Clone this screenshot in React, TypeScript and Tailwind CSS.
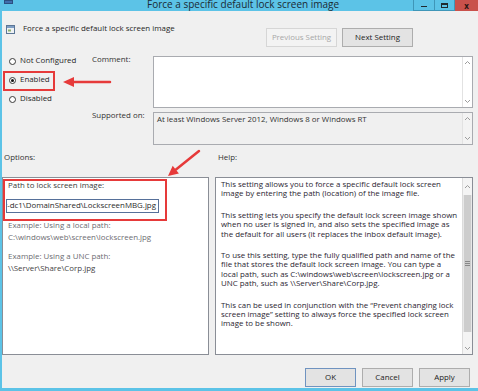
import React from "react";

const HELP = [
  [
    "This setting allows you to force a specific default lock screen",
    "image by entering the path (location) of the image file.",
  ],
  [
    "This setting lets you specify the default lock screen image shown",
    "when no user is signed in, and also sets the specified image as",
    "the default for all users (it replaces the inbox default image).",
  ],
  [
    "To use this setting, type the fully qualified path and name of the",
    "file that stores the default lock screen image. You can type a",
    "local path, such as C:\\windows\\web\\screen\\lockscreen.jpg or a",
    "UNC path, such as \\\\Server\\Share\\Corp.jpg.",
  ],
  [
    "This can be used in conjunction with the \u201cPrevent changing lock",
    "screen image\u201d setting to always force the specified lock screen",
    "image to be shown.",
  ],
];

function Chevron({ up }: { up?: boolean }) {
  return (
    <svg width="7" height="5" viewBox="0 0 7 5" className="text-[#9c9c9c]">
      <path
        d={up ? "M1 4 L3.5 1.5 L6 4" : "M1 1 L3.5 3.5 L6 1"}
        fill="none"
        stroke="currentColor"
        strokeWidth="1"
      />
    </svg>
  );
}

function Radio({ label, checked }: { label: string; checked?: boolean }) {
  return (
    <div className="flex items-center h-[10px] gap-[4.5px]">
      <span className="w-[7px] h-[7px] rounded-full border border-[#3a3a3a] bg-white flex items-center justify-center">
        {checked && <span className="w-[3px] h-[3px] rounded-full bg-[#111]" />}
      </span>
      <span className="text-[#262626]">{label}</span>
    </div>
  );
}

function MiniScroll({ bg }: { bg: string }) {
  return (
    <div className={`w-[10px] flex flex-col justify-between items-center border-l border-[#e2e2e2] py-[3px] ${bg}`}>
      <Chevron up />
      <Chevron />
    </div>
  );
}

function PolicyIcon() {
  return (
    <svg width="9" height="9" viewBox="0 0 9 9">
      <rect x="0.5" y="0.5" width="8" height="8" fill="#eef1f4" stroke="#5b7696" />
      <rect x="1" y="1" width="7" height="2" fill="#7f9ec4" />
      <rect x="2" y="4.5" width="3" height="2" fill="#8fb06a" />
    </svg>
  );
}

export default function App() {
  return (
    <div className="relative w-[478px] h-[391px] overflow-hidden bg-[#5cc3e7] flex flex-col font-['Open_Sans',sans-serif] text-[7.9px] leading-[9.4px] text-[#222]">
      {/* title bar */}
      <div className="h-[11px] flex items-start overflow-hidden">
        <div className="ml-[4px] w-[9px] h-[4px] bg-[#3f6fae] border border-[#2c4f80]" />
        <span className="ml-[134px] -mt-[3px] text-[10px] leading-[14px] text-[#1b2a33] whitespace-nowrap">
          Force a specific default lock screen image
        </span>
        <div className="ml-auto flex h-[11px]">
          <div className="w-[22px] h-full border-x border-b border-[#3f96b8] flex items-end justify-center pb-[3px]">
            <div className="w-[6px] h-[1.5px] bg-[#1f2a30]" />
          </div>
          <div className="w-[20px] h-full border-r border-b border-[#3f96b8] flex items-center justify-center">
            <div className="w-[7px] h-[5px] border border-[#1f2a30] border-t-2" />
          </div>
          <div className="w-[23px] h-full bg-[#c9514b] flex items-center justify-center text-[8px] leading-[8px] font-bold text-[#2a1512]">
            x
          </div>
        </div>
      </div>

      {/* window body */}
      <div className="flex-1 ml-[2px] mb-[3px] bg-[#f0f0f0] flex flex-col">
        {/* header */}
        <div className="mt-[13px] flex items-start">
          <div className="flex items-center h-[10px] pl-[4px] gap-[8px]">
            <PolicyIcon />
            <span className="whitespace-nowrap text-[#262626]">Force a specific default lock screen image</span>
          </div>
          <div className="ml-auto mr-[65px] mt-[4px] flex gap-[5px]">
            <div className="w-[71px] h-[19px] flex items-center justify-center border border-[#d6d6d6] bg-[#f3f3f3] text-[#a8a8a8]">
              Previous Setting
            </div>
            <div className="w-[71px] h-[19px] flex items-center justify-center border border-[#adadad] bg-[#e3e3e3] text-[#1e1e1e]">
              Next Setting
            </div>
          </div>
        </div>

        {/* state + comment */}
        <div className="mt-[9px] flex">
          <div className="w-[90px] pl-[6.5px] flex flex-col gap-[9px]">
            <Radio label="Not Configured" />
            <Radio label="Enabled" checked />
            <Radio label="Disabled" />
          </div>
          <div className="flex-1 mr-[5px] flex flex-col">
            <div className="flex h-[52px]">
              <span className="w-[61px] -mt-[1px] text-[#333]">Comment:</span>
              <div className="flex-1 flex border border-[#a9abb0] bg-white">
                <div className="flex-1" />
                <MiniScroll bg="bg-white" />
              </div>
            </div>
            <div className="flex h-[33px] mt-[4px]">
              <span className="w-[61px] -mt-[1px] text-[#333]">Supported on:</span>
              <div className="flex-1 flex border border-[#a9abb0] bg-[#f0f0f0]">
                <div className="flex-1 pl-[3px] pt-[2px] text-[#333]">
                  At least Windows Server 2012, Windows 8 or Windows RT
                </div>
                <MiniScroll bg="bg-[#f3f3f3]" />
              </div>
            </div>
          </div>
        </div>

        {/* options / help labels */}
        <div className="mt-[7px] flex h-[10px] leading-[10px] text-[#333]">
          <span className="w-[216px] pl-[2px]">Options:</span>
          <span>Help:</span>
        </div>

        {/* panels */}
        <div className="mt-[15px] flex gap-[6px] h-[178px]">
          <div className="w-[207px] border border-[#8a8e96] bg-white flex flex-col pt-[3px]">
            <span className="pl-[5px] text-[#3a3a3a]">Path to lock screen image:</span>
            <div className="ml-[3px] mt-[8.5px] w-[153px] h-[14px] border border-[#56709a] bg-white flex items-center justify-end overflow-hidden pr-[2px]">
              <span className="whitespace-nowrap text-[#2a2a2a]">\\srv-dc1\DomainShared\LockscreenMBG.jpg</span>
              <span className="w-px h-[9px] bg-[#111]" />
            </div>
            <div className="pl-[5px] mt-[5.75px] leading-[12.5px] text-[#6c6c72] flex flex-col">
              <span>Example: Using a local path:</span>
              <span>C:\windows\web\screen\lockscreen.jpg</span>
            </div>
            <div className="pl-[5px] mt-[6px] leading-[12.5px] text-[#6c6c72] flex flex-col">
              <span>Example: Using a UNC path:</span>
              <span className="text-[#444]">\\Server\Share\Corp.jpg</span>
            </div>
          </div>

          <div className="w-[258px] border border-[#8a8e96] bg-white flex">
            <div className="flex-1 pl-[5px] pt-[2px] flex flex-col gap-[12px] text-[#2b2632]">
              {HELP.map((p, i) => (
                <div key={i} className="flex flex-col">
                  {p.map((l, j) => (
                    <span key={j} className="whitespace-nowrap">
                      {l}
                    </span>
                  ))}
                </div>
              ))}
            </div>
            <div className="w-[10px] flex flex-col bg-[#e8e8e8] border-l border-[#dcdcdc]">
              <div className="h-[17px] flex items-center justify-center bg-[#f4f4f4]">
                <Chevron up />
              </div>
              <div className="h-[137px] mx-[1px] bg-[#cdcdcd] flex items-center justify-center">
                <div className="w-[5px] h-[5px] flex flex-col justify-between">
                  <div className="h-px bg-[#888]" />
                  <div className="h-px bg-[#888]" />
                  <div className="h-px bg-[#888]" />
                </div>
              </div>
              <div className="flex-1 bg-[#f4f4f4]" />
              <div className="h-[12px] flex items-center justify-center bg-[#f4f4f4]">
                <Chevron />
              </div>
            </div>
          </div>
        </div>

        {/* dialog buttons */}
        <div className="mt-[13px] flex justify-end gap-[6px] mr-[8px]">
          <div className="w-[51px] h-[19px] flex items-center justify-center border border-[#6f93c0] bg-[#e3e3e3]">OK</div>
          <div className="w-[51px] h-[19px] flex items-center justify-center border border-[#adadad] bg-[#e3e3e3]">Cancel</div>
          <div className="w-[51px] h-[19px] flex items-center justify-center border border-[#adadad] bg-[#e3e3e3]">Apply</div>
        </div>
      </div>

      {/* annotations */}
      <svg className="absolute inset-0 pointer-events-none" width="478" height="391" viewBox="0 0 478 391">
        <g stroke="#e63a3a" strokeWidth="2" fill="none">
          <rect x="4" y="72" width="50" height="18" />
          <rect x="4" y="180" width="162" height="40" />
        </g>
        <g stroke="#e63a3a" strokeWidth="2.5" strokeLinecap="round">
          <line x1="110" y1="82" x2="72" y2="82" />
          <line x1="199" y1="151" x2="176" y2="169.5" />
        </g>
        <g fill="#e63a3a">
          <polygon points="63,82 74,77 74,87" />
          <polygon points="168,176 178.9,173.6 172.7,165.8" />
        </g>
      </svg>
    </div>
  );
}
